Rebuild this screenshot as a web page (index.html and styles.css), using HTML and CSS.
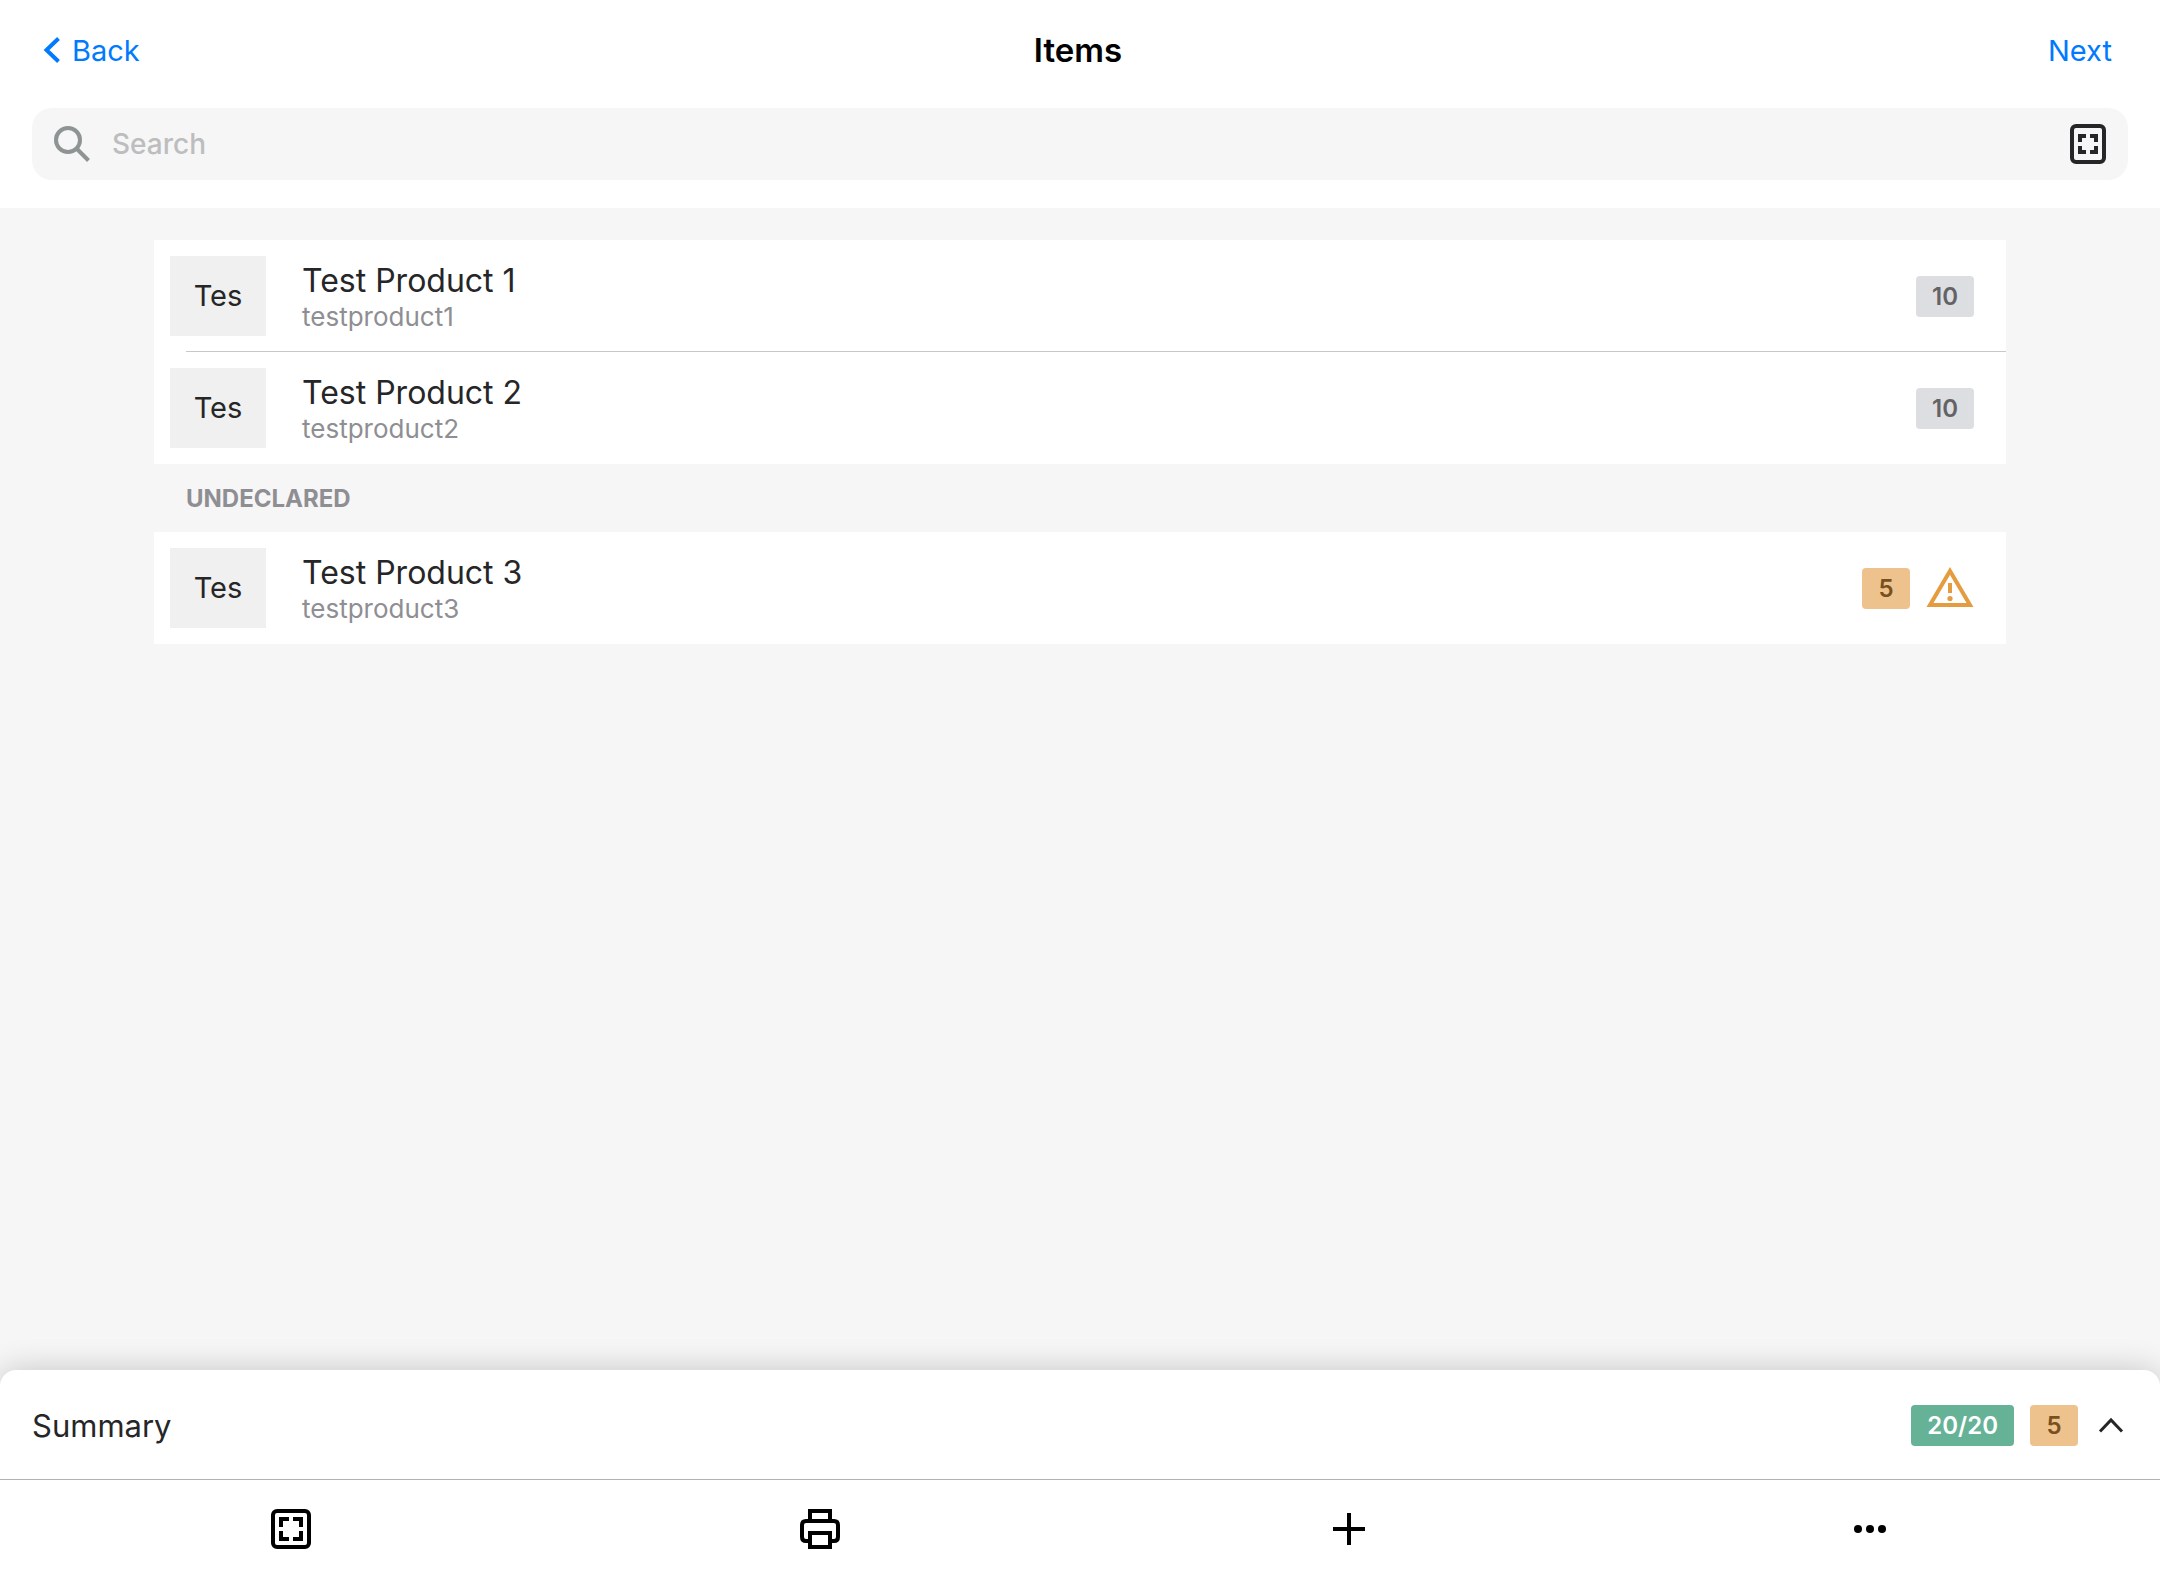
FILE: index.html
```html
<!DOCTYPE html>
<html lang="en">

  <head>
    <meta charset="UTF-8">
    <title>Items</title>
    <link rel="stylesheet" href="styles.css">
  </head>

  <body>
    <header class="header">
      <nav class="nav">
        <a class="nav-link" href="#">
          <svg class="icon-back" width="16" height="28" viewBox="0 0 16 28">
            <path d="M14.500 2.500L2.500 14L14.500 25.500" />
          </svg>
          Back
        </a>
        <h1 class="nav-title">Items</h1>
        <a class="nav-link nav-next" href="#">Next</a>
      </nav>
      <form class="search">
        <svg class="icon-search" width="40" height="40" viewBox="0 0 40 40">
          <circle cx="16" cy="16" r="12" />
          <path d="M24.500 24.500L36.500 36.500" />
        </svg>
        <input class="search-input" type="text" placeholder="Search" aria-label="Search">
        <button class="icon-btn" type="button" aria-label="Scan">
          <svg class="icon-line" width="36" height="40" viewBox="0 0 36 40">
            <rect x="2" y="2" width="32" height="36" rx="4" />
            <path d="M10 18V12H16M20 12H26V18M26 22V28H20M16 28H10V22" />
          </svg>
        </button>
      </form>
    </header>

    <main class="content">
      <ul class="list">
        <li class="item">
          <div class="thumb">Tes</div>
          <div class="info">
            <p class="name">Test Product 1</p>
            <p class="code">testproduct1</p>
          </div>
          <span class="badge">10</span>
        </li>
        <li class="item">
          <div class="thumb">Tes</div>
          <div class="info">
            <p class="name">Test Product 2</p>
            <p class="code">testproduct2</p>
          </div>
          <span class="badge">10</span>
        </li>
      </ul>
      <h2 class="list-title">Undeclared</h2>
      <ul class="list">
        <li class="item">
          <div class="thumb">Tes</div>
          <div class="info">
            <p class="name">Test Product 3</p>
            <p class="code">testproduct3</p>
          </div>
          <span class="badge badge-warn">5</span>
          <svg class="icon-warn" width="48" height="48" viewBox="0 0 48 48">
            <path class="outline" d="M24 7L44 41H4Z" />
            <path class="mark" d="M22 19H26V29H22Z" />
            <circle class="mark" cx="24" cy="34.500" r="2.600" />
          </svg>
        </li>
      </ul>
    </main>

    <footer class="footer">
      <button class="summary" type="button">
        <span class="summary-text">Summary</span>
        <span class="badge badge-ok">20/20</span>
        <span class="badge badge-warn">5</span>
        <svg class="icon-up" width="34" height="34" viewBox="0 0 34 34">
          <path d="M6 22.500L17 11L28 22.500" />
        </svg>
      </button>
      <div class="toolbar">
        <button class="icon-btn" type="button" aria-label="Scan">
          <svg class="icon-line" width="40" height="40" viewBox="0 0 40 40">
            <rect x="2" y="2" width="36" height="36" rx="4" />
            <path d="M10 18V10H18M22 10H30V18M30 22V30H22M18 30H10V22" />
          </svg>
        </button>
        <button class="icon-btn" type="button" aria-label="Print">
          <svg class="icon-line" width="40" height="40" viewBox="0 0 40 40">
            <path d="M10 12V2H30V12" />
            <path d="M10 32H6Q2 32 2 28V16Q2 12 6 12H34Q38 12 38 16V28Q38 32 34 32H30" />
            <rect x="10" y="24" width="20" height="14" />
          </svg>
        </button>
        <button class="icon-btn" type="button" aria-label="Add">
          <svg class="icon-line" width="40" height="40" viewBox="0 0 40 40">
            <path d="M20 4V36M4 20H36" />
          </svg>
        </button>
        <button class="icon-btn" type="button" aria-label="More">
          <svg class="icon-dots" width="24" height="40" viewBox="0 0 24 40">
            <circle cx="0" cy="20" r="4" />
            <circle cx="12" cy="20" r="4" />
            <circle cx="24" cy="20" r="4" />
          </svg>
        </button>
      </div>
    </footer>
  </body>

</html>
```

FILE: styles.css
```css
* {
  margin: 0;
  padding: 0;
  box-sizing: border-box;
}

body {
  display: flex;
  flex-direction: column;
  min-height: 100vh;
  background: #f6f6f6;
  color: #262628;
  font-family: Inter, "Liberation Sans", sans-serif;
}

button {
  border: none;
  background: none;
  color: inherit;
  font: inherit;
  cursor: pointer;
}

/* top bar */
.header {
  padding: 0 32px 28px;
  background: #fff;
}

.nav {
  display: grid;
  grid-template-columns: 1fr auto 1fr;
  align-items: center;
  height: 108px;
  padding: 0 16px 8px 12px;
}

.nav-link {
  display: flex;
  align-items: center;
  gap: 12px;
  color: #007aff;
  font-size: 29px;
  text-decoration: none;
}

.nav-next {
  justify-content: flex-end;
}

.nav-title {
  color: #000;
  font-size: 33px;
  font-weight: 600;
}

.search {
  display: flex;
  align-items: center;
  height: 72px;
  padding: 0 22px 0 20px;
  border-radius: 20px;
  background: #f6f6f6;
}

.search-input {
  flex: 1;
  margin: 0 20px;
  border: none;
  outline: none;
  background: none;
  font-family: inherit;
  font-size: 28px;
  font-weight: 500;
}

.search-input::placeholder {
  color: #bdbdbf;
}

/* item list */
.content {
  flex: 1;
  padding: 32px 154px;
}

.list {
  list-style: none;
  background: #fff;
}

.item {
  display: flex;
  align-items: center;
  gap: 16px;
  height: 112px;
  padding: 0 32px 0 16px;
}

/* divider starts a little inside the row */
.item:not(:last-child) {
  background: linear-gradient(#c8c7cc, #c8c7cc) 32px 100% / 100% 1px no-repeat;
}

.thumb {
  width: 96px;
  height: 80px;
  background: #f0f0f0;
  font-size: 29px;
  line-height: 80px;
  text-align: center;
}

.info {
  flex: 1;
  padding: 2px 0 0 20px;
}

.name {
  font-size: 32px;
  line-height: 40px;
}

.code {
  color: #8e8e93;
  font-size: 26px;
  line-height: 32px;
}

.list-title {
  padding: 2px 32px 0;
  color: #8e8e93;
  font-size: 24px;
  font-weight: 700;
  line-height: 66px;
  text-transform: uppercase;
}

.badge {
  min-width: 48px;
  padding: 0 16px;
  border-radius: 4px;
  background: #dddee2;
  color: #636366;
  font-size: 24px;
  font-weight: 600;
  line-height: 41px;
  text-align: center;
}

.badge-warn {
  background: #eec28d;
  color: #76501f;
}

.badge-ok {
  background: #65b297;
  color: #fff;
}

/* bottom bar */
.footer {
  border-radius: 16px 16px 0 0;
  background: #fff;
  box-shadow: 0 0 32px rgba(0, 0, 0, 0.2);
}

.summary {
  display: flex;
  align-items: center;
  gap: 16px;
  width: 100%;
  height: 110px;
  padding: 2px 32px 0;
  border-bottom: 1px solid #b2b2b2;
}

.summary-text {
  flex: 1;
  font-size: 31px;
  text-align: left;
}

.toolbar {
  display: flex;
  justify-content: space-around;
  align-items: center;
  height: 100px;
  padding: 0 34px 2px 26px;
  color: #000;
}

/* icons */
.icon-btn,
.icon-btn svg {
  display: block;
}

svg {
  fill: none;
  overflow: visible;
}

.icon-line {
  stroke: currentColor;
  stroke-width: 4;
}

.icon-back {
  stroke: #007aff;
  stroke-width: 4;
}

.icon-search {
  stroke: #8e9393;
  stroke-width: 4;
}

.icon-up {
  stroke: #262628;
  stroke-width: 3;
}

.icon-dots {
  fill: currentColor;
}

.icon-warn .outline {
  stroke: #e59b3f;
  stroke-width: 4;
}

.icon-warn .mark {
  fill: #e59b3f;
}
```
